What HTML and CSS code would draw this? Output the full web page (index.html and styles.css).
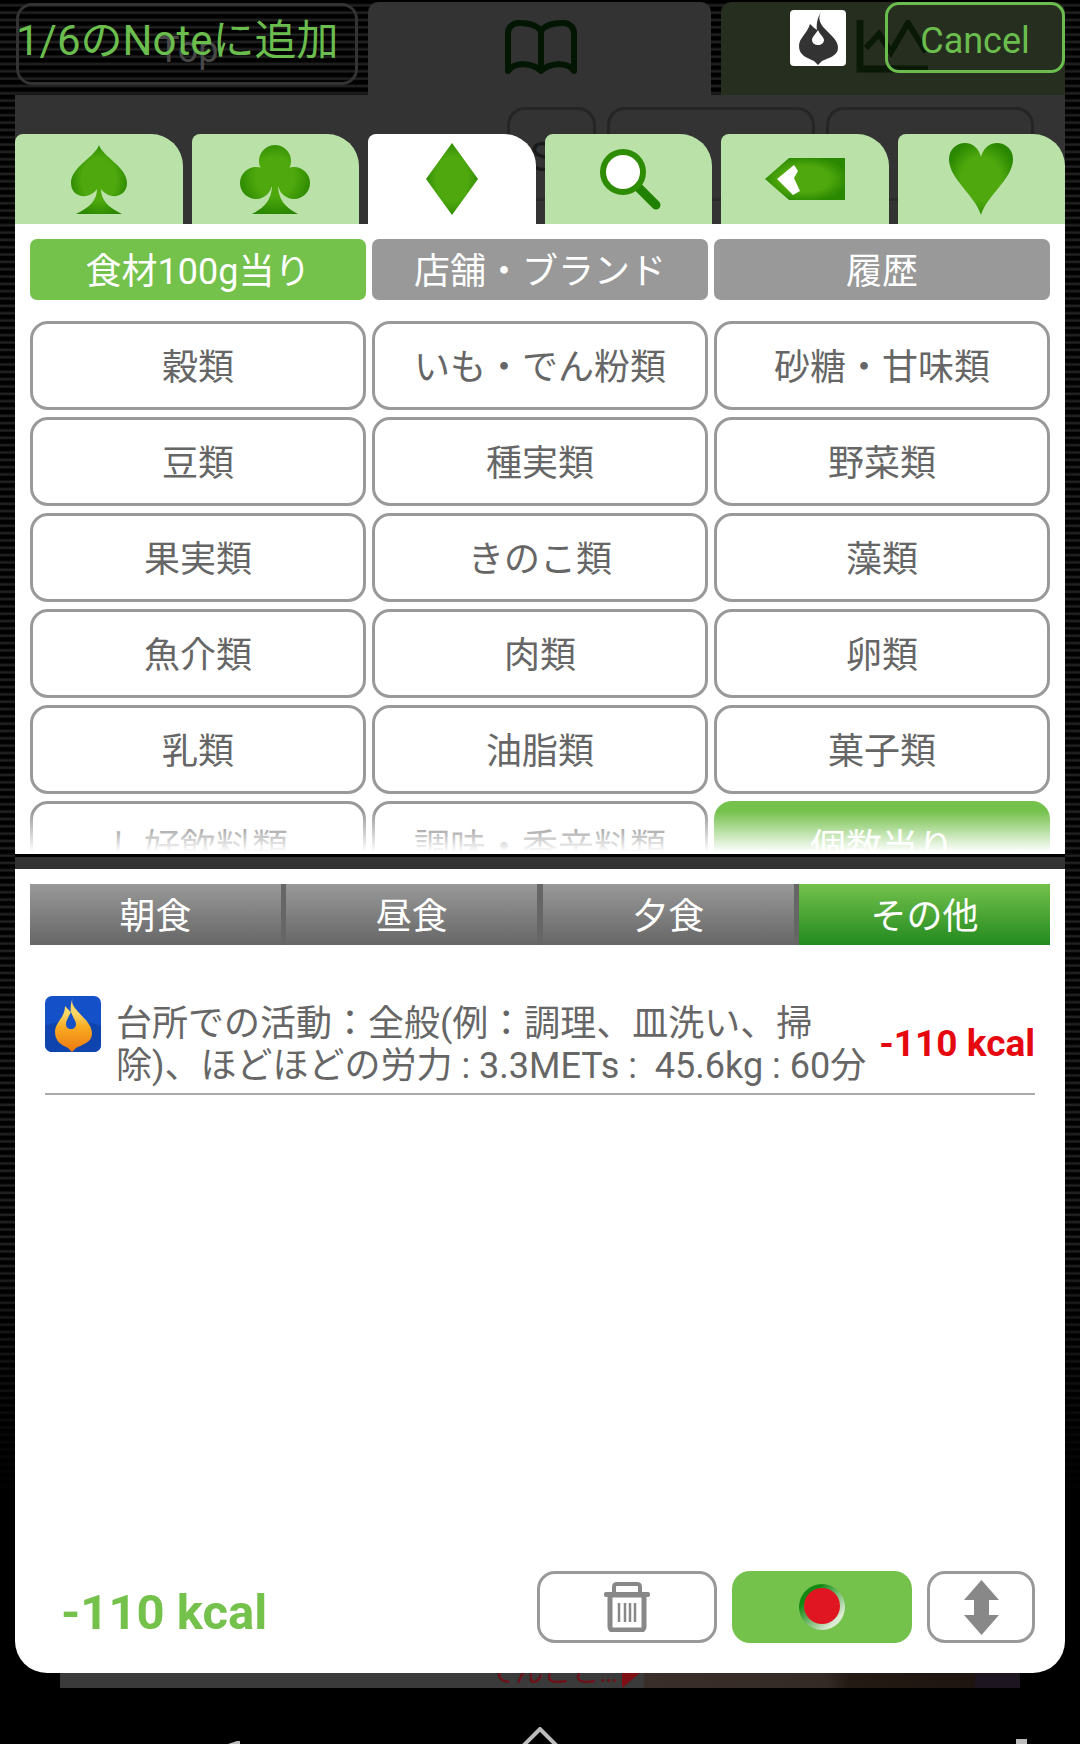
FILE: index.html
```html
<!DOCTYPE html>
<html lang="ja">
<head>
  <meta charset="UTF-8">
  <meta name="viewport" content="width=device-width, initial-scale=1.0">
  <title>Noteに追加</title>
  <link rel="stylesheet" href="styles.css">
</head>
<body>
  <svg class="svg-defs" width="0" height="0">
    <defs>
      <radialGradient id="suit" cx="50%" cy="50%" r="55%">
        <stop offset="0.55" stop-color="#4fa90e"/>
        <stop offset="1" stop-color="#2a8700"/>
      </radialGradient>
      <radialGradient id="club" gradientUnits="userSpaceOnUse" cx="35" cy="32" r="38">
        <stop offset="0.5" stop-color="#4fa90e"/>
        <stop offset="1" stop-color="#2a8700"/>
      </radialGradient>
      <linearGradient id="flame" x1="0" y1="0" x2="0" y2="1">
        <stop offset="0.3" stop-color="#f8d668"/>
        <stop offset="0.55" stop-color="#f8ab20"/>
        <stop offset="1" stop-color="#ec7812"/>
      </linearGradient>
      <linearGradient id="ring" x1="0" y1="0" x2="1" y2="1">
        <stop offset="0.25" stop-color="#128a12"/>
        <stop offset="0.8" stop-color="#dcecd4"/>
      </linearGradient>
    </defs>
  </svg>

  <div class="screen">
    <div class="stripes"></div>

    <!-- the page behind the dialog -->
    <div class="backdrop">
      <div class="top-tabs">
        <div class="top-tab-plain"><span class="top-label">Top</span></div>
        <div class="top-tab">
          <svg class="book-icon" width="74" height="54" viewBox="0 0 74 54">
            <path d="M37 11C33 5 25 3 15 3C9 3 4 7 4 13L4 51C11 41 29 43 37 51C45 43 63 41 70 51L70 13C70 7 65 3 59 3C49 3 41 5 37 11ZM37 11L37 51" fill="none" stroke="#031503" stroke-width="6" stroke-linejoin="round"/>
          </svg>
        </div>
        <div class="top-tab top-tab-green">
          <svg class="chart-icon" width="72" height="53" viewBox="0 0 72 53">
            <path d="M4 0L4 49L72 49" fill="none" stroke="#0a1906" stroke-width="7"/>
            <path d="M10 28L23 14L35 32L52 3L70 32" fill="none" stroke="#0a1906" stroke-width="6"/>
          </svg>
        </div>
      </div>
      <div class="backdrop-body">
        <div class="dim-box"><span>S</span></div>
        <div class="dim-box"><span>0</span></div>
        <div class="dim-box"><span>5</span></div>
      </div>
    </div>

    <div class="dialog">
      <div class="action-bar">
        <button class="note-btn">1/6のNoteに追加</button>
        <div class="logo-white">
          <svg width="56" height="56" viewBox="0 0 56 56">
            <path d="M31 2C27 10 31 15 37 21C43 27 48 31 48 38C48 46 38 48 32 51L28 55L24 51C18 48 9 46 9 36C9 28 17 24 20 14C24 18 26 19 27 20C26 13 28 7 31 2Z" fill="#333"/>
            <path d="M28 20C25 25 22 27 22 30C22 33 25 35 28 35C31 35 34 33 34 30C34 27 30 25 28 20Z" fill="#fff"/>
          </svg>
        </div>
        <button class="cancel-btn">Cancel</button>
      </div>

      <div class="suit-tabs">
        <div class="suit-tab">
          <svg width="56" height="69" viewBox="0 0 56 69"><path d="M28 0C24 12 0 22 0 38C0 48 8 52 15 51C20 50 24 47 26 44C26 54 20 62 5 69L51 69C36 62 30 54 30 44C32 47 36 50 41 51C48 52 56 48 56 38C56 22 32 12 28 0Z" fill="url(#suit)"/></svg>
        </div>
        <div class="suit-tab">
          <svg width="70" height="69" viewBox="0 0 70 69">
            <circle cx="35" cy="16" r="16" fill="url(#club)"/>
            <circle cx="16" cy="38" r="16" fill="url(#club)"/>
            <circle cx="54" cy="38" r="16" fill="url(#club)"/>
            <path d="M24 24L46 24L46 42L38 42C39 54 44 62 58 69L12 69C26 62 31 54 32 42L24 42Z" fill="url(#club)"/>
          </svg>
        </div>
        <div class="suit-tab suit-tab-active">
          <svg width="52" height="72" viewBox="0 0 52 72"><path d="M26 0L52 36L26 72L0 36Z" fill="url(#suit)"/></svg>
        </div>
        <div class="suit-tab">
          <svg class="search-icon" width="62" height="62" viewBox="0 0 62 62">
            <line x1="38" y1="38" x2="57" y2="57" stroke="#208000" stroke-width="9" stroke-linecap="round"/>
            <circle cx="24" cy="24" r="20" fill="#fff" stroke="#2e8c02" stroke-width="6"/>
          </svg>
        </div>
        <div class="suit-tab">
          <svg width="80" height="42" viewBox="0 0 80 42">
            <path d="M0 21L24 0L80 0L80 42L24 42Z" fill="url(#suit)"/>
            <path d="M12 21L29 7L33 13L29 20L35 33L28 37Z" fill="#fff"/>
          </svg>
        </div>
        <div class="suit-tab">
          <svg width="64" height="72" viewBox="0 0 64 72"><path d="M32 72C26 52 0 36 0 16C0 6 8 0 16 0C24 0 30 6 32 14C34 6 40 0 48 0C56 0 64 6 64 16C64 36 38 52 32 72Z" fill="url(#suit)"/></svg>
        </div>
      </div>

      <div class="food-pane">
        <div class="seg-row">
          <button class="seg seg-on">食材100g当り</button>
          <button class="seg">店舗・ブランド</button>
          <button class="seg">履歴</button>
        </div>
        <div class="food-grid">
          <button class="food-btn">穀類</button>
          <button class="food-btn">いも・でん粉類</button>
          <button class="food-btn">砂糖・甘味類</button>
          <button class="food-btn">豆類</button>
          <button class="food-btn">種実類</button>
          <button class="food-btn">野菜類</button>
          <button class="food-btn">果実類</button>
          <button class="food-btn">きのこ類</button>
          <button class="food-btn">藻類</button>
          <button class="food-btn">魚介類</button>
          <button class="food-btn">肉類</button>
          <button class="food-btn">卵類</button>
          <button class="food-btn">乳類</button>
          <button class="food-btn">油脂類</button>
          <button class="food-btn">菓子類</button>
          <button class="food-btn">し好飲料類</button>
          <button class="food-btn">調味・香辛料類</button>
          <button class="food-btn food-btn-on">個数当り</button>
        </div>
        <div class="fade"></div>
      </div>

      <div class="gutter"></div>

      <div class="note-pane">
        <div class="meal-tabs">
          <div class="meal">朝食</div>
          <div class="meal">昼食</div>
          <div class="meal">夕食</div>
          <div class="meal meal-on">その他</div>
        </div>

        <div class="entry">
          <svg class="entry-icon" width="56" height="56" viewBox="0 0 56 56">
            <rect width="56" height="56" rx="7" fill="#1450c8"/>
            <path d="M0 30C12 24 44 24 56 30L56 49A7 7 0 0 1 49 56L7 56A7 7 0 0 1 0 49Z" fill="#0f43ad"/>
            <path d="M28 1C25 8 30 12 37 20C43 26 47 31 47 38C47 46 37 49 31 52L27 56L23 52C17 49 10 46 10 36C10 26 20 22 20 10C24 14 26 16 26 17C25 12 26 6 28 1Z" fill="url(#flame)"/>
            <path d="M26 16C23 22 21 25 21 28C21 31 23 33 26 33C29 33 31 31 31 28C31 25 28 22 26 16Z" fill="#1450c8"/>
          </svg>
          <div class="entry-text">台所での活動：全般(例：調理、皿洗い、掃除)、ほどほどの労力 : 3.3METs :&nbsp; 45.6kg : 60分</div>
          <div class="entry-kcal">-110 kcal</div>
        </div>

        <div class="note-footer">
          <div class="total">-110 kcal</div>
          <button class="foot-btn foot-wide">
            <svg width="46" height="50" viewBox="0 0 46 50">
              <path d="M10 11L10 5Q10 2 13 2L33 2Q36 2 36 5L36 11" fill="none" stroke="#888" stroke-width="4"/>
              <rect x="0" y="10" width="46" height="5" rx="2" fill="#888"/>
              <rect x="6" y="13" width="34" height="35" rx="3" fill="none" stroke="#888" stroke-width="5"/>
              <path d="M15 21L15 40M21 21L21 40M26 21L26 40M31 21L31 40" stroke="#888" stroke-width="2.5"/>
            </svg>
          </button>
          <button class="foot-btn foot-wide foot-green">
            <svg width="46" height="46" viewBox="0 0 46 46">
              <circle cx="23" cy="23" r="23" fill="url(#ring)"/>
              <circle cx="23" cy="22" r="18" fill="#e01722"/>
            </svg>
          </button>
          <button class="foot-btn foot-narrow">
            <svg width="35" height="55" viewBox="0 0 35 55"><path d="M17.5 0L35 20L25 20L25 35L35 35L17.5 55L0 35L10 35L10 20L0 20Z" fill="#888"/></svg>
          </button>
        </div>
      </div>
    </div>

    <div class="ad-strip">
      <div class="ad-left"><span class="ad-text">てんこと…</span><span class="ad-mark"></span></div>
      <div class="ad-photo"></div>
      <div class="ad-end"></div>
    </div>

    <div class="nav-bar">
      <svg class="nav-back" width="12" height="3" viewBox="0 0 12 3"><path d="M0 3L9 0L12 0L12 3Z" fill="#bbb"/></svg>
      <svg class="nav-home" width="40" height="17" viewBox="0 0 40 17"><path d="M3 19L20 2L37 19" fill="none" stroke="#bbb" stroke-width="4"/></svg>
      <div class="nav-recent"></div>
    </div>
  </div>
</body>
</html>
```

FILE: styles.css
```css
* {
  box-sizing: border-box;
}
body {
  margin: 0;
  background-color: #000;
  font-family: Roboto, "Noto Sans CJK JP", sans-serif;
}
button {
  font-family: inherit;
  background: none;
  padding: 0;
  margin: 0;
}
.svg-defs {
  position: absolute;
}
.screen {
  position: relative;
  width: 1080px;
  height: 1744px;
  overflow: hidden;
  background-color: #000;
}

/* stripes show at the screen edges and fade out lower down */
.stripes {
  position: absolute;
  left: 0;
  top: 0;
  width: 1080px;
  height: 1540px;
  background: repeating-linear-gradient(#000 0, #000 3px, #202020 5px, #202020 6px, #000 7.33px);
  -webkit-mask-image: linear-gradient(#000 1250px, transparent 1500px);
  mask-image: linear-gradient(#000 1250px, transparent 1500px);
}

/* page behind the dialog */
.backdrop {
  position: absolute;
  left: 15px;
  top: 0;
  width: 1050px;
}
.top-tabs {
  display: flex;
  height: 95px;
  padding-top: 2px;
}
.top-tab-plain {
  width: 353px;
  padding: 27px 0 0 143px;
}
.top-label {
  color: #484848;
  font-size: 36px;
}
.top-tab {
  width: 343px;
  background-color: #333;
  border-radius: 10px 10px 0 0;
  padding: 18px 0 0 136px;
}
.top-tab-green {
  width: 344px;
  margin-left: 10px;
  background-color: #262e20;
  padding-left: 135px;
}
.book-icon,
.chart-icon {
  display: block;
}
.backdrop-body {
  height: 780px;
  background-color: #333;
  display: flex;
  align-items: flex-start;
  gap: 11px;
  padding: 12px 0 0 492px;
}
.dim-box {
  height: 94px;
  width: 208px;
  border: 3px solid #252525;
  border-bottom-color: #2a2a2a;
  border-radius: 18px 18px 0 0;
  color: #1a1a1a;
  font-size: 40px;
  padding: 24px 0 0 172px;
}
.dim-box:first-child {
  width: 89px;
  padding-left: 20px;
}

/* dialog */
.dialog {
  position: relative;
  width: 1050px;
  margin-left: 15px;
}
.action-bar {
  display: flex;
  align-items: flex-start;
  height: 134px;
}
.note-btn {
  width: 342px;
  height: 82px;
  margin: 3px 0 0 1px;
  padding: 0 0 24px 0;
  border: 3px solid #333;
  border-radius: 16px;
  color: #6bbd4e;
  font-size: 42px;
  text-align: left;
  text-indent: -3px;
  white-space: nowrap;
}
.logo-white {
  width: 56px;
  height: 56px;
  margin: 10px 0 0 auto;
  background-color: #fff;
  border-radius: 4px;
}
.logo-white svg {
  display: block;
}
.cancel-btn {
  width: 180px;
  height: 71px;
  margin: 2px 0 0 39px;
  padding-top: 6px;
  border: 3px solid #6bbd4e;
  border-radius: 14px;
  color: #6bbd4e;
  font-size: 36px;
}
.suit-tabs {
  display: flex;
  justify-content: space-between;
  height: 90px;
}
.suit-tab {
  width: 167.5px;
  background-color: #b9e1a8;
  border-radius: 8px 32px 0 0;
  display: flex;
  align-items: center;
  justify-content: center;
}
.suit-tab-active {
  background-color: #fff;
}
.search-icon {
  margin-left: 4px;
}

.food-pane {
  position: relative;
  height: 630px;
  overflow: hidden;
  background-color: #fff;
  padding: 15px 15px 0;
}
.seg-row {
  display: grid;
  grid-template-columns: repeat(3, 336px);
  gap: 6px;
}
.seg {
  height: 61px;
  padding-bottom: 4px;
  border: none;
  border-radius: 7px;
  background-color: #999;
  color: #fff;
  font-size: 36px;
}
.seg-on {
  background-color: #74c14c;
}
.food-grid {
  display: grid;
  grid-template-columns: repeat(3, 336px);
  grid-auto-rows: 89px;
  gap: 7px 6px;
  margin-top: 21px;
}
.food-btn {
  padding-bottom: 4px;
  border: 3px solid #999;
  border-radius: 18px;
  background-color: #fff;
  color: #666;
  font-size: 36px;
}
.food-btn-on {
  border: none;
  background-color: #74c14c;
  color: #fff;
}
.fade {
  position: absolute;
  left: 0;
  right: 0;
  bottom: 0;
  height: 43px;
  background: linear-gradient(rgba(255, 255, 255, 0), #fff 95%);
}
.gutter {
  height: 15px;
  background-color: #333;
  border-top: 3px solid #000;
}

.note-pane {
  display: flex;
  flex-direction: column;
  height: 804px;
  background-color: #fff;
  border-radius: 0 0 32px 32px;
  padding: 15px 30px 30px 15px;
}
.meal-tabs {
  display: grid;
  grid-template-columns: repeat(4, 1fr);
  gap: 5.5px;
  height: 61px;
  margin-right: -15px;
  background-color: #666;
}
.meal {
  display: flex;
  align-items: center;
  justify-content: center;
  padding-bottom: 4px;
  background: linear-gradient(#999, #666);
  color: #fff;
  font-size: 36px;
}
.meal-on {
  background: linear-gradient(#74c14c, #228a1f);
}
.entry {
  display: flex;
  align-items: center;
  margin: 51px 0 0 15px;
  padding: 5px 0 6px;
  border-bottom: 2px solid #aaa;
}
.entry-icon {
  flex: none;
  align-self: flex-start;
  margin-top: -5px;
}
.entry-text {
  width: 752px;
  margin-left: 15px;
  padding-top: 2px;
  color: #666;
  font-size: 36px;
  line-height: 42px;
}
.entry-kcal {
  margin-left: auto;
  padding-bottom: 2px;
  color: #e5090f;
  font-size: 37px;
  font-weight: 700;
  white-space: nowrap;
}
.note-footer {
  display: flex;
  align-items: center;
  margin-top: auto;
}
.total {
  margin-right: auto;
  padding: 11px 0 0 31px;
  color: #74c14c;
  font-size: 49px;
  font-weight: 700;
}
.foot-btn {
  display: flex;
  align-items: center;
  justify-content: center;
  height: 72px;
  margin-left: 15px;
  border: 3px solid #999;
  border-radius: 18px;
  background-color: #fff;
}
.foot-wide {
  width: 180px;
}
.foot-green {
  border: none;
  background-color: #74c14c;
}
.foot-narrow {
  width: 108px;
}

/* strip of the ad under the dialog */
.ad-strip {
  position: relative;
  display: flex;
  width: 960px;
  height: 15px;
  margin-left: 60px;
  overflow: hidden;
}
.ad-left {
  display: flex;
  justify-content: flex-end;
  width: 584px;
  background-color: #3a3a3a;
  padding-right: 4px;
}
.ad-text {
  margin-top: -14px;
  color: #6e1018;
  font-size: 28px;
  line-height: 28px;
  white-space: nowrap;
}
.ad-mark {
  width: 0;
  height: 0;
  margin-left: 4px;
  border-top: 15px solid #7d0f15;
  border-right: 18px solid transparent;
}
.ad-photo {
  flex: 1;
  background: linear-gradient(90deg, #3a2e2a 0, #332a26 55%, #241a14 62%, #1f1510 100%);
}
.ad-end {
  width: 45px;
  background-color: #1d1620;
}
.nav-bar {
  display: flex;
  align-items: flex-end;
  height: 56px;
  position: relative;
}
.nav-back {
  display: block;
  margin-left: 228px;
}
.nav-home {
  display: block;
  margin-left: 280px;
}
.nav-recent {
  width: 11px;
  height: 5px;
  margin-left: 456px;
  background-color: #bbb;
}
```
